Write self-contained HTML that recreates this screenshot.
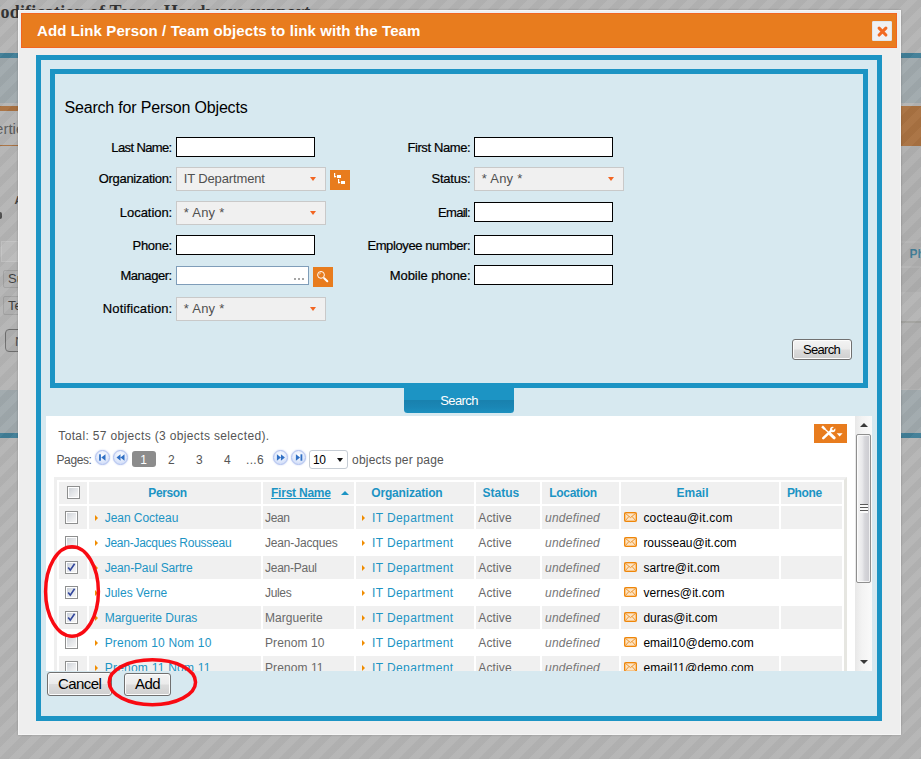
<!DOCTYPE html>
<html lang="en">
<head>
<meta charset="utf-8">
<title>Add Link Person / Team objects to link with the Team</title>
<style>
*{box-sizing:border-box;margin:0;padding:0}
html,body{width:921px;height:759px;overflow:hidden}
body{position:relative;background:#fff;font-family:"Liberation Sans",sans-serif;font-size:12px;color:#000}
.t{position:absolute;white-space:nowrap}
.r{position:absolute}
#page{position:absolute;left:0;top:0;width:921px;height:759px;overflow:hidden;background:#fff}
#ovl{position:absolute;left:-22px;top:0;width:980px;height:759px;
 background:repeating-linear-gradient(135deg,rgba(97,97,97,.5) 0,rgba(97,97,97,.5) 7.071px,rgba(111,111,111,.5) 7.071px,rgba(111,111,111,.5) 14.142px)}
#dlg{position:absolute;left:18px;top:10px;width:883px;height:725px;background:#eeeeee;border:1px solid #f5f5f5;box-shadow:0 0 2px rgba(0,0,0,.22)}
#titlebar{position:absolute;left:21px;top:13px;width:876px;height:35px;background:#e87c1e;border:1px solid #f26522}
#close{position:absolute;left:872px;top:21px;width:20px;height:20px;background:#f0f0f0;border:1px solid #dfe6ec;border-radius:1px}
#outer{position:absolute;left:36px;top:55px;width:846px;height:666px;border:5px solid #1c94c4;background:#d7e9f0}
#inner{position:absolute;left:50px;top:69px;width:818px;height:319px;border:5px solid #1c94c4;background:#d7e9f0}
.inp{position:absolute;height:20px;width:139px;background:#fff;border:1px solid #000}
.sel{position:absolute;height:23.5px;width:150px;background:#f0f0f0;border:1px solid #c9c9c9}
.sel i{position:absolute;right:9.2px;top:8.9px;width:0;height:0;border-left:3.9px solid transparent;border-right:3.9px solid transparent;border-top:4.7px solid #f26522}
.ob{position:absolute;width:20px;height:20px;background:#e87c1e}
.btn{position:absolute;border:1px solid #707070;border-radius:3px;background:linear-gradient(#f3f3f3 0,#ebebeb 48%,#dcdcdc 52%,#cfcfcf 100%);box-shadow:inset 0 0 0 1px #fcfcfc}
#tab{position:absolute;left:403.8px;top:388px;width:110.5px;height:24.7px;border-radius:0 0 3.5px 3.5px;background:linear-gradient(#1c94c4 0,#1c94c4 47%,#1981ae 50%,#1a86b5 75%,#1c90bf 100%)}
#panel{position:absolute;left:46px;top:416px;width:826px;height:254.5px;background:#fff;overflow:hidden}
.c{position:absolute;background:#f0f0f0}
.cb{position:absolute;width:13px;height:13px;border:1px solid #8e8f8f;background:#fff;padding:1px}
.cb b{display:block;width:9px;height:9px;background:linear-gradient(135deg,#cfd3d8 0,#e4e6e9 50%,#f6f6f6 100%)}
.arr{position:absolute;width:0;height:0;border-top:3px solid transparent;border-bottom:3px solid transparent;border-left:3.4px solid #f08c00}
.pg{position:absolute;width:15px;height:15px;border-radius:50%;border:1px solid #aebfee;background:radial-gradient(circle at 50% 35%,#ffffff 0,#e6edfc 45%,#c3d2f5 100%);box-shadow:0 0 1.5px rgba(120,150,230,.6)}
</style>
</head>
<body>

<div id="page">
<div class="t" style="left:-16.82px;top:1.5px;font:normal bold 18px 'Liberation Serif',serif;line-height:21px;letter-spacing:0.23px;color:#000">Modification of Team: Hardware support</div>
<div class="r" style="left:0;top:53px;width:921px;height:5px;background:#1c94c4"></div>
<div class="r" style="left:0;top:58px;width:921px;height:44.5px;background:#d7e9f0"></div>
<div class="r" style="left:0;top:105.5px;width:921px;height:40px;background:#e87c1e"></div>
<div class="r" style="left:-60px;top:111px;width:100px;height:34px;background:#fff"></div>
<div class="t " style="top:121.30px;font:normal normal 15px 'Liberation Sans',sans-serif;line-height:15px;color:#505050;left:-36.58px;">Properties</div>
<div class="t " style="top:194.69px;font:normal bold 11px 'Liberation Sans',sans-serif;line-height:11px;color:#222;left:14.50px;">A</div>
<div class="r" style="left:-3px;top:212px;width:5px;height:7px;background:#333;border-radius:2px"></div>
<div class="r" style="left:2px;top:237px;width:40px;height:24px;background:#fff;opacity:.0"></div>
<div class="r" style="left:2.5px;top:269.5px;width:60px;height:18px;background:#fafafa;border:1px solid #d8d8d8;border-radius:2px"></div>
<div class="t " style="top:272.00px;font:normal normal 13px 'Liberation Sans',sans-serif;line-height:13px;color:#111;left:8.00px;">Summary</div>
<div class="r" style="left:2.5px;top:296px;width:60px;height:18.5px;background:#fafafa;border:1px solid #d8d8d8;border-radius:2px"></div>
<div class="t " style="top:299.00px;font:normal normal 13px 'Liberation Sans',sans-serif;line-height:13px;color:#111;left:8.00px;">Team</div>
<div class="r" style="left:4.5px;top:329px;width:60px;height:23px;border:1px solid #777;border-radius:4px;background:#f4f4f4"></div>
<div class="t " style="top:335.00px;font:normal normal 13px 'Liberation Sans',sans-serif;line-height:13px;color:#333;left:15.00px;">Next</div>
<div class="r" style="left:880px;top:243px;width:60px;height:23px;background:#f3f3f3"></div>
<div class="r" style="left:880px;top:268px;width:60px;height:24px;background:#f3f3f3"></div>
<div class="r" style="left:880px;top:321px;width:60px;height:1.5px;background:#dcdcd6"></div>
<div class="r" style="left:880px;top:322.5px;width:60px;height:66px;background:#f6f6f6"></div>
<div class="r" style="left:880px;top:145.5px;width:60px;height:95.5px;background:#f6f6f6"></div>
<div class="t " style="top:247.84px;font:normal bold 12px 'Liberation Sans',sans-serif;line-height:12px;color:#1c94c4;left:909.50px;">Phone</div>
<div class="r" style="left:0;top:389.5px;width:921px;height:43.5px;background:#d7e9f0"></div>
<div class="r" style="left:0;top:433px;width:921px;height:5px;background:#1c94c4"></div>
</div>
<div id="ovl"></div>
<div class="r" style="left:1px;top:240.5px;width:30px;height:21.5px;background:rgba(255,255,255,.09);border:1px solid rgba(255,255,255,.12)"></div>
<div id="dlg"></div>
<div id="titlebar"></div>
<div class="t " style="top:23.05px;font:normal bold 15px 'Liberation Sans',sans-serif;line-height:15px;color:#fff;letter-spacing:0.109px;left:37.00px;">Add Link Person / Team objects to link with the Team</div>
<div id="close"><svg width="18" height="18" viewBox="0 0 18 18" style="display:block"><path d="M6.1 6.2 L12.9 13 M12.9 6.2 L6.1 13" stroke="#f26a21" stroke-width="3.1" stroke-linecap="round" fill="none"/></svg></div>
<div id="outer"></div>
<div id="inner"></div>
<div class="t " style="top:100.21px;font:normal normal 16px 'Liberation Sans',sans-serif;line-height:16px;color:#000;letter-spacing:-0.186px;left:64.50px;">Search for Person Objects</div>
<div class="t " style="top:140.75px;font:normal normal 13px 'Liberation Sans',sans-serif;line-height:13px;color:#000;letter-spacing:-0.617px;right:749.42px;-webkit-text-stroke:.2px #000;">Last Name:</div>
<div class="t " style="top:172.00px;font:normal normal 13px 'Liberation Sans',sans-serif;line-height:13px;color:#000;letter-spacing:-0.329px;right:749.13px;-webkit-text-stroke:.2px #000;">Organization:</div>
<div class="t " style="top:206.00px;font:normal normal 13px 'Liberation Sans',sans-serif;line-height:13px;color:#000;letter-spacing:-0.051px;right:748.85px;-webkit-text-stroke:.2px #000;">Location:</div>
<div class="t " style="top:239.00px;font:normal normal 13px 'Liberation Sans',sans-serif;line-height:13px;color:#000;letter-spacing:-0.317px;right:749.12px;-webkit-text-stroke:.2px #000;">Phone:</div>
<div class="t " style="top:269.00px;font:normal normal 13px 'Liberation Sans',sans-serif;line-height:13px;color:#000;letter-spacing:-0.452px;right:749.25px;-webkit-text-stroke:.2px #000;">Manager:</div>
<div class="t " style="top:301.50px;font:normal normal 13px 'Liberation Sans',sans-serif;line-height:13px;color:#000;letter-spacing:0.125px;right:748.67px;-webkit-text-stroke:.2px #000;">Notification:</div>
<div class="t " style="top:140.75px;font:normal normal 13px 'Liberation Sans',sans-serif;line-height:13px;color:#000;letter-spacing:-0.397px;right:450.80px;-webkit-text-stroke:.2px #000;">First Name:</div>
<div class="t " style="top:172.00px;font:normal normal 13px 'Liberation Sans',sans-serif;line-height:13px;color:#000;letter-spacing:-0.238px;right:450.64px;-webkit-text-stroke:.2px #000;">Status:</div>
<div class="t " style="top:206.00px;font:normal normal 13px 'Liberation Sans',sans-serif;line-height:13px;color:#000;letter-spacing:-0.72px;right:451.12px;-webkit-text-stroke:.2px #000;">Email:</div>
<div class="t " style="top:239.00px;font:normal normal 13px 'Liberation Sans',sans-serif;line-height:13px;color:#000;letter-spacing:-0.394px;right:450.79px;-webkit-text-stroke:.2px #000;">Employee number:</div>
<div class="t " style="top:269.00px;font:normal normal 13px 'Liberation Sans',sans-serif;line-height:13px;color:#000;letter-spacing:-0.067px;right:450.47px;-webkit-text-stroke:.2px #000;">Mobile phone:</div>
<div class="inp" style="left:176px;top:137px;width:139px;height:20px;"></div>
<div class="inp" style="left:474px;top:137px;width:139px;height:20px;"></div>
<div class="sel" style="left:176px;top:167px"><i></i></div>
<div class="t " style="top:172.20px;font:normal normal 13px 'Liberation Sans',sans-serif;line-height:13px;color:#505050;letter-spacing:-0.137px;left:183.75px;">IT Department</div>
<div class="sel" style="left:474px;top:167px"><i></i></div>
<div class="t " style="top:172.20px;font:normal normal 13px 'Liberation Sans',sans-serif;line-height:13px;color:#505050;letter-spacing:0.251px;left:481.75px;">* Any *</div>
<div class="sel" style="left:176px;top:201px"><i></i></div>
<div class="t " style="top:206.20px;font:normal normal 13px 'Liberation Sans',sans-serif;line-height:13px;color:#505050;letter-spacing:0.251px;left:183.75px;">* Any *</div>
<div class="inp" style="left:474px;top:202px;width:139px;height:20px;"></div>
<div class="inp" style="left:176px;top:235px;width:139px;height:20px;"></div>
<div class="inp" style="left:474px;top:235px;width:139px;height:20px;"></div>
<div class="inp" style="left:176px;top:266px;width:133px;height:19px;border-color:#7f9db9"></div>
<div class="inp" style="left:474px;top:265px;width:139px;height:20px;"></div>
<div class="sel" style="left:176px;top:297px"><i></i></div>
<div class="t " style="top:302.20px;font:normal normal 13px 'Liberation Sans',sans-serif;line-height:13px;color:#505050;letter-spacing:0.251px;left:183.75px;">* Any *</div>
<div class="r" style="left:294px;top:278px;width:2px;height:2px;background:#a6a6a6"></div>
<div class="r" style="left:298px;top:278px;width:2px;height:2px;background:#a6a6a6"></div>
<div class="r" style="left:302px;top:278px;width:2px;height:2px;background:#a6a6a6"></div>
<div class="ob" style="left:330px;top:170px"><svg width="20" height="20" viewBox="0 0 20 20" style="display:block" fill="#fff"><rect x="4" y="3" width="1.2" height="4.2"/><rect x="4" y="6" width="2.2" height="1.2"/><rect x="7" y="5" width="4" height="3"/><rect x="8" y="9" width="1.2" height="4.2"/><rect x="8" y="12" width="2.2" height="1.2"/><rect x="11" y="11" width="4" height="3"/></svg></div>
<div class="ob" style="left:313px;top:267px"><svg width="20" height="20" viewBox="0 0 20 20" style="display:block" fill="none"><circle cx="8" cy="7.9" r="3.4" stroke="#fff" stroke-width="1"/><path d="M6.3 7.6 A1.8 1.8 0 0 1 8 5.9" stroke="#fbd9b5" stroke-width=".8"/><path d="M11.2 11.2 L14.3 14.3" stroke="#fff" stroke-width="2" stroke-linecap="round"/></svg></div>
<div class="btn" style="left:791.7px;top:339px;width:60px;height:20.5px"></div>
<div class="t " style="top:342.75px;font:normal normal 13px 'Liberation Sans',sans-serif;line-height:13px;color:#000;letter-spacing:-0.698px;left:803.00px;">Search</div>
<div id="tab"></div>
<div class="t " style="top:394.30px;font:normal normal 13px 'Liberation Sans',sans-serif;line-height:13px;color:#fff;letter-spacing:-0.598px;left:440.20px;">Search</div>
<div id="panel">
<div class="t " style="top:14.44px;font:normal normal 12px 'Liberation Sans',sans-serif;line-height:12px;color:#555;letter-spacing:0.353px;left:12.30px;">Total: 57 objects (3 objects selected).</div>
<div class="r" style="left:768px;top:8px;width:33px;height:19px;background:#e87c1e"><svg width="33" height="19" viewBox="0 0 33 19" style="display:block"><g stroke="#fff" fill="none"><path d="M9.3 14.1 L17.6 6.4" stroke-width="2.6" stroke-linecap="round"/><circle cx="18.7" cy="5.5" r="1.9" stroke-width="1.6"/><path d="M8.9 3.2 L10.1 4.4" stroke-width="2.4" stroke-linecap="square"/><path d="M10 4.2 L15.4 9.2" stroke-width="1.25"/><path d="M16 9.9 L20.2 13.8" stroke-width="3" stroke-linecap="round"/></g><path d="M18.9 5.3 L22.2 2" stroke="#e87c1e" stroke-width="1.9" fill="none"/><path d="M22.7 9.2 h5.9 l-2.95 3.4 z" fill="#fff"/></svg></div>
<div class="t " style="top:38.14px;font:normal normal 12px 'Liberation Sans',sans-serif;line-height:12px;color:#555;letter-spacing:-0.393px;left:10.50px;">Pages:</div>
<div class="pg" style="left:48.5px;top:34px;width:15px;height:15px;"><svg width="13" height="13" viewBox="0.5 0.5 13 13" style="display:block"><rect x="3.6" y="3.8" width="1.8" height="6.4" fill="#2f6fc4"/><path d="M10 3.8 L5.8 7 L10 10.2 z" fill="#2f6fc4"/></svg></div>
<div class="pg" style="left:66.5px;top:34px;width:15px;height:15px;"><svg width="13" height="13" viewBox="0.5 0.5 13 13" style="display:block"><path d="M7 3.8 L3 7 L7 10.2 z M11 3.8 L7 7 L11 10.2 z" fill="#2f6fc4"/></svg></div>
<div class="r" style="left:86px;top:35px;width:24px;height:15.5px;background:#8c8c8c;border-radius:3px"></div>
<div class="t " style="top:38.14px;font:normal normal 12px 'Liberation Sans',sans-serif;line-height:12px;color:#fff;left:94.30px;">1</div>
<div class="t " style="top:38.14px;font:normal normal 12px 'Liberation Sans',sans-serif;line-height:12px;color:#555;left:122.00px;">2</div>
<div class="t " style="top:38.14px;font:normal normal 12px 'Liberation Sans',sans-serif;line-height:12px;color:#555;left:150.00px;">3</div>
<div class="t " style="top:38.14px;font:normal normal 12px 'Liberation Sans',sans-serif;line-height:12px;color:#555;left:178.00px;">4</div>
<div class="t " style="top:38.14px;font:normal normal 12px 'Liberation Sans',sans-serif;line-height:12px;color:#555;letter-spacing:0.331px;left:200.00px;">...6</div>
<div class="pg" style="left:226.5px;top:34px;width:15px;height:15px;"><svg width="13" height="13" viewBox="0.5 0.5 13 13" style="display:block"><path d="M3.4 3.8 L7.4 7 L3.4 10.2 z M7.4 3.8 L11.4 7 L7.4 10.2 z" fill="#2f6fc4"/></svg></div>
<div class="pg" style="left:244.5px;top:34px;width:15px;height:15px;"><svg width="13" height="13" viewBox="0.5 0.5 13 13" style="display:block"><rect x="9" y="3.8" width="1.8" height="6.4" fill="#2f6fc4"/><path d="M4.4 3.8 L8.6 7 L4.4 10.2 z" fill="#2f6fc4"/></svg></div>
<div class="r" style="left:262.5px;top:34px;width:39.5px;height:18.5px;background:#fff;border:1px solid #c5ccd4;border-radius:3px"><i style="position:absolute;right:4.5px;top:7px;border-left:3.6px solid transparent;border-right:3.6px solid transparent;border-top:4.2px solid #111"></i></div>
<div class="t " style="top:38.14px;font:normal normal 12px 'Liberation Sans',sans-serif;line-height:12px;color:#000;letter-spacing:-0.424px;left:267.00px;">10</div>
<div class="t " style="top:38.14px;font:normal normal 12px 'Liberation Sans',sans-serif;line-height:12px;color:#555;letter-spacing:0.204px;left:306.00px;">objects per page</div>
<div class="r" style="left:8px;top:61px;width:793px;height:250px;border:3px solid #efefef;border-right-color:#e6e6e1;border-bottom-color:#e6e6e1;background:#fff"></div>
<div class="c" style="left:13px;top:66px;width:28px;height:22px;"></div>
<div class="c" style="left:43px;top:66px;width:172px;height:22px;"></div>
<div class="c" style="left:217px;top:66px;width:91px;height:22px;"></div>
<div class="c" style="left:310px;top:66px;width:118px;height:22px;"></div>
<div class="c" style="left:430px;top:66px;width:64px;height:22px;"></div>
<div class="c" style="left:496px;top:66px;width:77px;height:22px;"></div>
<div class="c" style="left:575px;top:66px;width:158px;height:22px;"></div>
<div class="c" style="left:735px;top:66px;width:61px;height:22px;"></div>
<div class="cb" style="left:21px;top:70px;width:13px;height:13px;"><b></b></div>
<div class="t " style="top:70.59px;font:normal bold 12px 'Liberation Sans',sans-serif;line-height:12px;color:#1c94c4;letter-spacing:-0.364px;left:102.25px;">Person</div>
<div class="t " style="top:70.59px;font:normal bold 12px 'Liberation Sans',sans-serif;line-height:12px;color:#1c94c4;letter-spacing:-0.227px;left:225.00px;text-decoration:underline;">First Name</div>
<div class="r" style="left:294.5px;top:74.60000000000002px;width:0px;height:0px;border-left:4.1px solid transparent;border-right:4.1px solid transparent;border-bottom:4.6px solid #1c94c4"></div>
<div class="t " style="top:70.59px;font:normal bold 12px 'Liberation Sans',sans-serif;line-height:12px;color:#1c94c4;letter-spacing:-0.174px;left:325.25px;">Organization</div>
<div class="t " style="top:70.59px;font:normal bold 12px 'Liberation Sans',sans-serif;line-height:12px;color:#1c94c4;letter-spacing:0.013px;left:436.50px;">Status</div>
<div class="t " style="top:70.59px;font:normal bold 12px 'Liberation Sans',sans-serif;line-height:12px;color:#1c94c4;letter-spacing:-0.312px;left:503.25px;">Location</div>
<div class="t " style="top:70.59px;font:normal bold 12px 'Liberation Sans',sans-serif;line-height:12px;color:#1c94c4;letter-spacing:-0.003px;left:630.50px;">Email</div>
<div class="t " style="top:70.59px;font:normal bold 12px 'Liberation Sans',sans-serif;line-height:12px;color:#1c94c4;letter-spacing:-0.384px;left:741.00px;">Phone</div>
<div class="c" style="left:13px;top:90px;width:28px;height:23px;"></div>
<div class="c" style="left:43px;top:90px;width:172px;height:23px;"></div>
<div class="c" style="left:217px;top:90px;width:91px;height:23px;"></div>
<div class="c" style="left:310px;top:90px;width:118px;height:23px;"></div>
<div class="c" style="left:430px;top:90px;width:64px;height:23px;"></div>
<div class="c" style="left:496px;top:90px;width:77px;height:23px;"></div>
<div class="c" style="left:575px;top:90px;width:158px;height:23px;"></div>
<div class="c" style="left:735px;top:90px;width:61px;height:23px;"></div>
<div class="cb" style="left:19px;top:95px;width:13px;height:13px;"><b></b></div>
<div class="arr" style="left:48.5px;top:98.5px;width:0px;height:0px;"></div>
<div class="t " style="top:95.59px;font:normal normal 12px 'Liberation Sans',sans-serif;line-height:12px;color:#1c94c4;letter-spacing:-0.038px;left:58.70px;">Jean Cocteau</div>
<div class="t " style="top:95.59px;font:normal normal 12px 'Liberation Sans',sans-serif;line-height:12px;color:#696969;letter-spacing:-0.355px;left:219.00px;">Jean</div>
<div class="arr" style="left:315.5px;top:98.5px;width:0px;height:0px;"></div>
<div class="t " style="top:95.59px;font:normal normal 12px 'Liberation Sans',sans-serif;line-height:12px;color:#1c94c4;letter-spacing:0.389px;left:326.00px;">IT Department</div>
<div class="t " style="top:95.59px;font:normal normal 12px 'Liberation Sans',sans-serif;line-height:12px;color:#696969;letter-spacing:0.137px;left:432.25px;">Active</div>
<div class="t " style="top:95.59px;font:italic normal 12px 'Liberation Sans',sans-serif;line-height:12px;color:#777;letter-spacing:0.254px;left:499.00px;">undefined</div>
<div class="r" style="left:578px;top:96px;width:13px;height:10px;border:1px solid #ee8608;border-radius:1.2px;background:#fce3c2;box-shadow:inset 0 0 0 .5px #f3a54a"><svg width="11" height="8" viewBox="0 0 11 8" style="display:block"><path d="M0 0 L5.5 4.6 L11 0 M0 8 L4 3.4 M11 8 L7 3.4" stroke="#ee9630" stroke-width="1" fill="none"/></svg></div>
<div class="t " style="top:95.59px;font:normal normal 12px 'Liberation Sans',sans-serif;line-height:12px;color:#000;letter-spacing:0.22px;left:597.40px;">cocteau@it.com</div>
<div class="cb" style="left:19px;top:120px;width:13px;height:13px;"><b></b></div>
<div class="arr" style="left:48.5px;top:123.5px;width:0px;height:0px;"></div>
<div class="t " style="top:120.59px;font:normal normal 12px 'Liberation Sans',sans-serif;line-height:12px;color:#1c94c4;letter-spacing:-0.261px;left:58.70px;">Jean-Jacques Rousseau</div>
<div class="t " style="top:120.59px;font:normal normal 12px 'Liberation Sans',sans-serif;line-height:12px;color:#696969;letter-spacing:-0.176px;left:219.00px;">Jean-Jacques</div>
<div class="arr" style="left:315.5px;top:123.5px;width:0px;height:0px;"></div>
<div class="t " style="top:120.59px;font:normal normal 12px 'Liberation Sans',sans-serif;line-height:12px;color:#1c94c4;letter-spacing:0.389px;left:326.00px;">IT Department</div>
<div class="t " style="top:120.59px;font:normal normal 12px 'Liberation Sans',sans-serif;line-height:12px;color:#696969;letter-spacing:0.137px;left:432.25px;">Active</div>
<div class="t " style="top:120.59px;font:italic normal 12px 'Liberation Sans',sans-serif;line-height:12px;color:#777;letter-spacing:0.254px;left:499.00px;">undefined</div>
<div class="r" style="left:578px;top:121px;width:13px;height:10px;border:1px solid #ee8608;border-radius:1.2px;background:#fce3c2;box-shadow:inset 0 0 0 .5px #f3a54a"><svg width="11" height="8" viewBox="0 0 11 8" style="display:block"><path d="M0 0 L5.5 4.6 L11 0 M0 8 L4 3.4 M11 8 L7 3.4" stroke="#ee9630" stroke-width="1" fill="none"/></svg></div>
<div class="t " style="top:120.59px;font:normal normal 12px 'Liberation Sans',sans-serif;line-height:12px;color:#000;letter-spacing:-0.03px;left:597.40px;">rousseau@it.com</div>
<div class="c" style="left:13px;top:140px;width:28px;height:23px;"></div>
<div class="c" style="left:43px;top:140px;width:172px;height:23px;"></div>
<div class="c" style="left:217px;top:140px;width:91px;height:23px;"></div>
<div class="c" style="left:310px;top:140px;width:118px;height:23px;"></div>
<div class="c" style="left:430px;top:140px;width:64px;height:23px;"></div>
<div class="c" style="left:496px;top:140px;width:77px;height:23px;"></div>
<div class="c" style="left:575px;top:140px;width:158px;height:23px;"></div>
<div class="c" style="left:735px;top:140px;width:61px;height:23px;"></div>
<div class="cb" style="left:19px;top:145px;width:13px;height:13px;"><b style="background:linear-gradient(135deg,#c9cfd9 0,#e9ebef 60%,#f6f6f6 100%)"></b><svg width="11" height="11" viewBox="0 0 11 11" style="position:absolute;left:0;top:0"><path d="M2.2 5.4 L4.3 8.2 L8.6 1.8" stroke="#33479c" stroke-width="1.65" fill="none" stroke-linejoin="miter"/></svg></div>
<div class="arr" style="left:48.5px;top:148.5px;width:0px;height:0px;"></div>
<div class="t " style="top:145.59px;font:normal normal 12px 'Liberation Sans',sans-serif;line-height:12px;color:#1c94c4;letter-spacing:-0.14px;left:58.70px;">Jean-Paul Sartre</div>
<div class="t " style="top:145.59px;font:normal normal 12px 'Liberation Sans',sans-serif;line-height:12px;color:#696969;letter-spacing:-0.259px;left:219.00px;">Jean-Paul</div>
<div class="arr" style="left:315.5px;top:148.5px;width:0px;height:0px;"></div>
<div class="t " style="top:145.59px;font:normal normal 12px 'Liberation Sans',sans-serif;line-height:12px;color:#1c94c4;letter-spacing:0.389px;left:326.00px;">IT Department</div>
<div class="t " style="top:145.59px;font:normal normal 12px 'Liberation Sans',sans-serif;line-height:12px;color:#696969;letter-spacing:0.137px;left:432.25px;">Active</div>
<div class="t " style="top:145.59px;font:italic normal 12px 'Liberation Sans',sans-serif;line-height:12px;color:#777;letter-spacing:0.254px;left:499.00px;">undefined</div>
<div class="r" style="left:578px;top:146px;width:13px;height:10px;border:1px solid #ee8608;border-radius:1.2px;background:#fce3c2;box-shadow:inset 0 0 0 .5px #f3a54a"><svg width="11" height="8" viewBox="0 0 11 8" style="display:block"><path d="M0 0 L5.5 4.6 L11 0 M0 8 L4 3.4 M11 8 L7 3.4" stroke="#ee9630" stroke-width="1" fill="none"/></svg></div>
<div class="t " style="top:145.59px;font:normal normal 12px 'Liberation Sans',sans-serif;line-height:12px;color:#000;letter-spacing:0.134px;left:597.40px;">sartre@it.com</div>
<div class="cb" style="left:19px;top:170px;width:13px;height:13px;"><b style="background:linear-gradient(135deg,#c9cfd9 0,#e9ebef 60%,#f6f6f6 100%)"></b><svg width="11" height="11" viewBox="0 0 11 11" style="position:absolute;left:0;top:0"><path d="M2.2 5.4 L4.3 8.2 L8.6 1.8" stroke="#33479c" stroke-width="1.65" fill="none" stroke-linejoin="miter"/></svg></div>
<div class="arr" style="left:48.5px;top:173.5px;width:0px;height:0px;"></div>
<div class="t " style="top:170.59px;font:normal normal 12px 'Liberation Sans',sans-serif;line-height:12px;color:#1c94c4;letter-spacing:-0.019px;left:58.70px;">Jules Verne</div>
<div class="t " style="top:170.59px;font:normal normal 12px 'Liberation Sans',sans-serif;line-height:12px;color:#696969;letter-spacing:-0.343px;left:219.00px;">Jules</div>
<div class="arr" style="left:315.5px;top:173.5px;width:0px;height:0px;"></div>
<div class="t " style="top:170.59px;font:normal normal 12px 'Liberation Sans',sans-serif;line-height:12px;color:#1c94c4;letter-spacing:0.389px;left:326.00px;">IT Department</div>
<div class="t " style="top:170.59px;font:normal normal 12px 'Liberation Sans',sans-serif;line-height:12px;color:#696969;letter-spacing:0.137px;left:432.25px;">Active</div>
<div class="t " style="top:170.59px;font:italic normal 12px 'Liberation Sans',sans-serif;line-height:12px;color:#777;letter-spacing:0.254px;left:499.00px;">undefined</div>
<div class="r" style="left:578px;top:171px;width:13px;height:10px;border:1px solid #ee8608;border-radius:1.2px;background:#fce3c2;box-shadow:inset 0 0 0 .5px #f3a54a"><svg width="11" height="8" viewBox="0 0 11 8" style="display:block"><path d="M0 0 L5.5 4.6 L11 0 M0 8 L4 3.4 M11 8 L7 3.4" stroke="#ee9630" stroke-width="1" fill="none"/></svg></div>
<div class="t " style="top:170.59px;font:normal normal 12px 'Liberation Sans',sans-serif;line-height:12px;color:#000;letter-spacing:0.077px;left:597.40px;">vernes@it.com</div>
<div class="c" style="left:13px;top:190px;width:28px;height:23px;"></div>
<div class="c" style="left:43px;top:190px;width:172px;height:23px;"></div>
<div class="c" style="left:217px;top:190px;width:91px;height:23px;"></div>
<div class="c" style="left:310px;top:190px;width:118px;height:23px;"></div>
<div class="c" style="left:430px;top:190px;width:64px;height:23px;"></div>
<div class="c" style="left:496px;top:190px;width:77px;height:23px;"></div>
<div class="c" style="left:575px;top:190px;width:158px;height:23px;"></div>
<div class="c" style="left:735px;top:190px;width:61px;height:23px;"></div>
<div class="cb" style="left:19px;top:195px;width:13px;height:13px;"><b style="background:linear-gradient(135deg,#c9cfd9 0,#e9ebef 60%,#f6f6f6 100%)"></b><svg width="11" height="11" viewBox="0 0 11 11" style="position:absolute;left:0;top:0"><path d="M2.2 5.4 L4.3 8.2 L8.6 1.8" stroke="#33479c" stroke-width="1.65" fill="none" stroke-linejoin="miter"/></svg></div>
<div class="arr" style="left:48.5px;top:198.5px;width:0px;height:0px;"></div>
<div class="t " style="top:195.59px;font:normal normal 12px 'Liberation Sans',sans-serif;line-height:12px;color:#1c94c4;letter-spacing:-0.006px;left:58.70px;">Marguerite Duras</div>
<div class="t " style="top:195.59px;font:normal normal 12px 'Liberation Sans',sans-serif;line-height:12px;color:#696969;letter-spacing:0.034px;left:219.00px;">Marguerite</div>
<div class="arr" style="left:315.5px;top:198.5px;width:0px;height:0px;"></div>
<div class="t " style="top:195.59px;font:normal normal 12px 'Liberation Sans',sans-serif;line-height:12px;color:#1c94c4;letter-spacing:0.389px;left:326.00px;">IT Department</div>
<div class="t " style="top:195.59px;font:normal normal 12px 'Liberation Sans',sans-serif;line-height:12px;color:#696969;letter-spacing:0.137px;left:432.25px;">Active</div>
<div class="t " style="top:195.59px;font:italic normal 12px 'Liberation Sans',sans-serif;line-height:12px;color:#777;letter-spacing:0.254px;left:499.00px;">undefined</div>
<div class="r" style="left:578px;top:196px;width:13px;height:10px;border:1px solid #ee8608;border-radius:1.2px;background:#fce3c2;box-shadow:inset 0 0 0 .5px #f3a54a"><svg width="11" height="8" viewBox="0 0 11 8" style="display:block"><path d="M0 0 L5.5 4.6 L11 0 M0 8 L4 3.4 M11 8 L7 3.4" stroke="#ee9630" stroke-width="1" fill="none"/></svg></div>
<div class="t " style="top:195.59px;font:normal normal 12px 'Liberation Sans',sans-serif;line-height:12px;color:#000;letter-spacing:-0.009px;left:597.40px;">duras@it.com</div>
<div class="cb" style="left:19px;top:220px;width:13px;height:13px;"><b></b></div>
<div class="arr" style="left:48.5px;top:223.5px;width:0px;height:0px;"></div>
<div class="t " style="top:220.59px;font:normal normal 12px 'Liberation Sans',sans-serif;line-height:12px;color:#1c94c4;letter-spacing:0.172px;left:58.70px;">Prenom 10 Nom 10</div>
<div class="t " style="top:220.59px;font:normal normal 12px 'Liberation Sans',sans-serif;line-height:12px;color:#696969;letter-spacing:0.1px;left:219.00px;">Prenom 10</div>
<div class="arr" style="left:315.5px;top:223.5px;width:0px;height:0px;"></div>
<div class="t " style="top:220.59px;font:normal normal 12px 'Liberation Sans',sans-serif;line-height:12px;color:#1c94c4;letter-spacing:0.389px;left:326.00px;">IT Department</div>
<div class="t " style="top:220.59px;font:normal normal 12px 'Liberation Sans',sans-serif;line-height:12px;color:#696969;letter-spacing:0.137px;left:432.25px;">Active</div>
<div class="t " style="top:220.59px;font:italic normal 12px 'Liberation Sans',sans-serif;line-height:12px;color:#777;letter-spacing:0.254px;left:499.00px;">undefined</div>
<div class="r" style="left:578px;top:221px;width:13px;height:10px;border:1px solid #ee8608;border-radius:1.2px;background:#fce3c2;box-shadow:inset 0 0 0 .5px #f3a54a"><svg width="11" height="8" viewBox="0 0 11 8" style="display:block"><path d="M0 0 L5.5 4.6 L11 0 M0 8 L4 3.4 M11 8 L7 3.4" stroke="#ee9630" stroke-width="1" fill="none"/></svg></div>
<div class="t " style="top:220.59px;font:normal normal 12px 'Liberation Sans',sans-serif;line-height:12px;color:#000;letter-spacing:0.011px;left:597.40px;">email10@demo.com</div>
<div class="c" style="left:13px;top:240px;width:28px;height:23px;"></div>
<div class="c" style="left:43px;top:240px;width:172px;height:23px;"></div>
<div class="c" style="left:217px;top:240px;width:91px;height:23px;"></div>
<div class="c" style="left:310px;top:240px;width:118px;height:23px;"></div>
<div class="c" style="left:430px;top:240px;width:64px;height:23px;"></div>
<div class="c" style="left:496px;top:240px;width:77px;height:23px;"></div>
<div class="c" style="left:575px;top:240px;width:158px;height:23px;"></div>
<div class="c" style="left:735px;top:240px;width:61px;height:23px;"></div>
<div class="cb" style="left:19px;top:245px;width:13px;height:13px;"><b></b></div>
<div class="arr" style="left:48.5px;top:248.5px;width:0px;height:0px;"></div>
<div class="t " style="top:245.59px;font:normal normal 12px 'Liberation Sans',sans-serif;line-height:12px;color:#1c94c4;letter-spacing:0.233px;left:58.70px;">Prenom 11 Nom 11</div>
<div class="t " style="top:245.59px;font:normal normal 12px 'Liberation Sans',sans-serif;line-height:12px;color:#696969;letter-spacing:0.088px;left:219.00px;">Prenom 11</div>
<div class="arr" style="left:315.5px;top:248.5px;width:0px;height:0px;"></div>
<div class="t " style="top:245.59px;font:normal normal 12px 'Liberation Sans',sans-serif;line-height:12px;color:#1c94c4;letter-spacing:0.389px;left:326.00px;">IT Department</div>
<div class="t " style="top:245.59px;font:normal normal 12px 'Liberation Sans',sans-serif;line-height:12px;color:#696969;letter-spacing:0.137px;left:432.25px;">Active</div>
<div class="t " style="top:245.59px;font:italic normal 12px 'Liberation Sans',sans-serif;line-height:12px;color:#777;letter-spacing:0.254px;left:499.00px;">undefined</div>
<div class="r" style="left:578px;top:246px;width:13px;height:10px;border:1px solid #ee8608;border-radius:1.2px;background:#fce3c2;box-shadow:inset 0 0 0 .5px #f3a54a"><svg width="11" height="8" viewBox="0 0 11 8" style="display:block"><path d="M0 0 L5.5 4.6 L11 0 M0 8 L4 3.4 M11 8 L7 3.4" stroke="#ee9630" stroke-width="1" fill="none"/></svg></div>
<div class="t " style="top:245.59px;font:normal normal 12px 'Liberation Sans',sans-serif;line-height:12px;color:#000;letter-spacing:0.067px;left:597.40px;">email11@demo.com</div>
<div class="r" style="left:809px;top:0px;width:17px;height:254.5px;background:linear-gradient(90deg,#e8e8e8 0,#f3f3f3 40%,#fafafa 100%)"></div>
<div class="r" style="left:814.2px;top:6.800000000000011px;width:0px;height:0px;border-left:4.2px solid transparent;border-right:4.2px solid transparent;border-bottom:4.6px solid #3a3a3a"></div>
<div class="r" style="left:814.2px;top:244px;width:0px;height:0px;border-left:4.2px solid transparent;border-right:4.2px solid transparent;border-top:4.6px solid #3a3a3a"></div>
<div class="r" style="left:810.3px;top:18px;width:14.6px;height:148.6px;border:1px solid #8f8f8f;border-radius:2px;background:linear-gradient(90deg,#f5f5f5 0,#e9e9eb 40%,#d6d6da 60%,#cacacf 100%);box-shadow:inset 0 0 0 1px rgba(255,255,255,.7)"></div>
<div class="r" style="left:813.7px;top:88px;width:8px;height:1.4px;background:#5a5a5a"></div>
<div class="r" style="left:813.7px;top:89.39999999999998px;width:8px;height:1.2px;background:#fafafa"></div>
<div class="r" style="left:813.7px;top:91px;width:8px;height:1.4px;background:#5a5a5a"></div>
<div class="r" style="left:813.7px;top:92.39999999999998px;width:8px;height:1.2px;background:#fafafa"></div>
<div class="r" style="left:813.7px;top:94px;width:8px;height:1.4px;background:#5a5a5a"></div>
<div class="r" style="left:813.7px;top:95.39999999999998px;width:8px;height:1.2px;background:#fafafa"></div>
</div>
<div class="btn" style="left:47px;top:672px;width:65px;height:23.5px"></div>
<div class="t " style="top:676.30px;font:normal normal 15px 'Liberation Sans',sans-serif;line-height:15px;color:#000;letter-spacing:-0.582px;left:58.10px;">Cancel</div>
<div class="btn" style="left:124px;top:672.5px;width:47px;height:23px"></div>
<div class="t " style="top:676.30px;font:normal normal 15px 'Liberation Sans',sans-serif;line-height:15px;color:#000;letter-spacing:-0.563px;left:135.00px;">Add</div>
<svg class="r" style="left:0;top:0" width="921" height="759" viewBox="0 0 921 759"><ellipse cx="72" cy="591.5" rx="26.4" ry="44.7" fill="none" stroke="#f90a12" stroke-width="3.5"/><ellipse cx="152.35" cy="682.25" rx="43.2" ry="22.4" fill="none" stroke="#f90a12" stroke-width="3.5"/></svg>
</body>
</html>
